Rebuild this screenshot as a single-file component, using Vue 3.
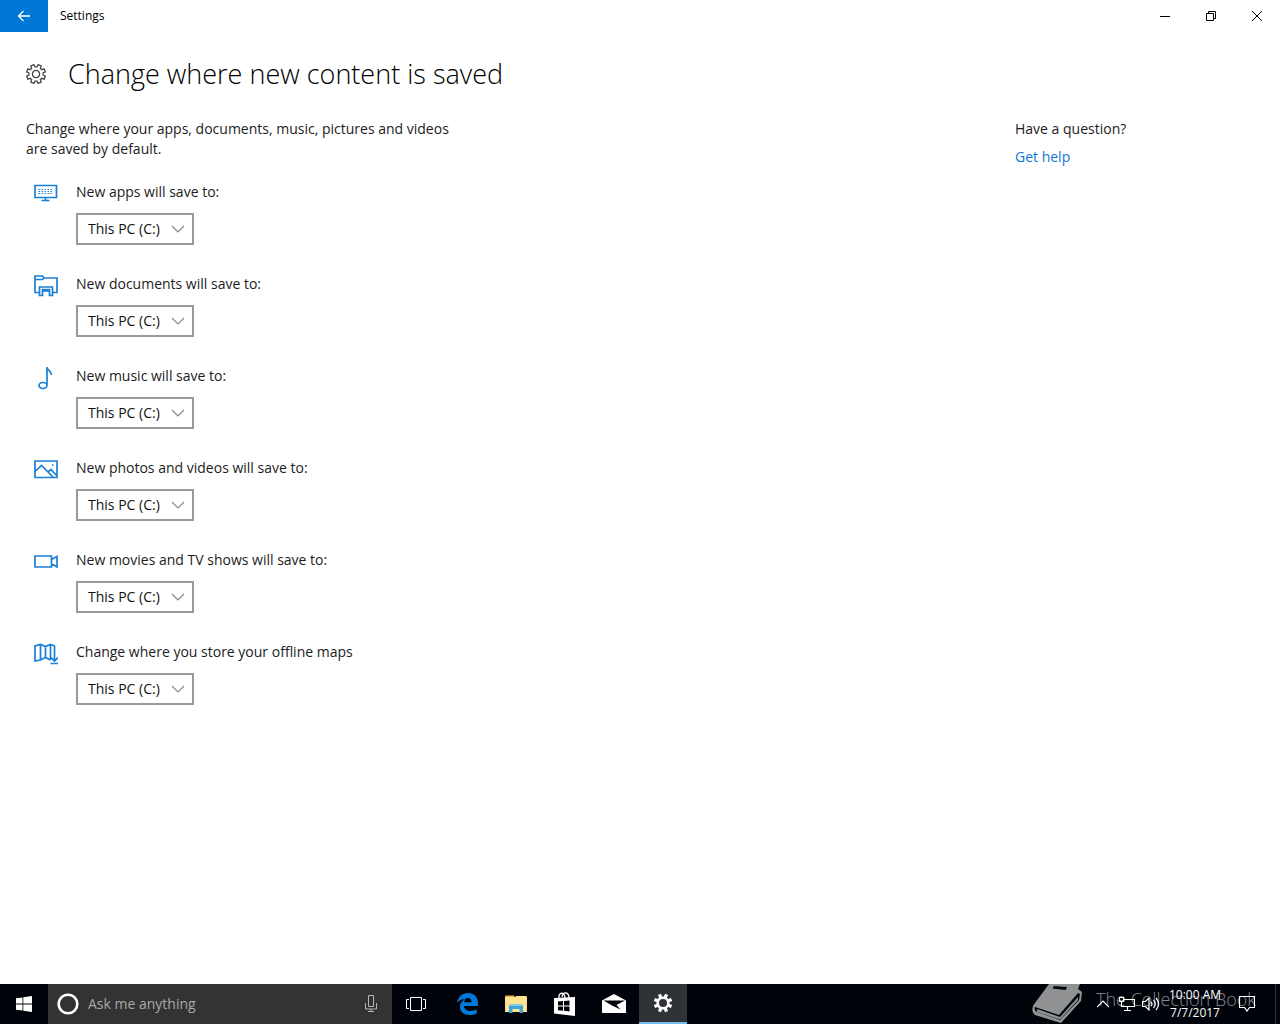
<script setup>
import { reactive } from 'vue'

const locations = reactive([
  { id: 'apps', label: 'New apps will save to:', drive: 'C' },
  { id: 'documents', label: 'New documents will save to:', drive: 'C' },
  { id: 'music', label: 'New music will save to:', drive: 'C' },
  { id: 'photos', label: 'New photos and videos will save to:', drive: 'C' },
  { id: 'movies', label: 'New movies and TV shows will save to:', drive: 'C' },
  { id: 'maps', label: 'Change where you store your offline maps', drive: 'C' },
])

// Outline of an eight-toothed cog centred on the origin.
function cog(outer, inner) {
  const points = []
  for (let i = 0; i < 8; i++) {
    const mid = (i * Math.PI) / 4 + Math.PI / 8
    for (const [offset, radius] of [[-0.25, inner], [-0.17, outer], [0.17, outer], [0.25, inner]]) {
      points.push(`${(radius * Math.cos(mid + offset)).toFixed(2)} ${(radius * Math.sin(mid + offset)).toFixed(2)}`)
    }
  }
  return `M${points.join('L')}Z`
}
const outlineCog = cog(9.6, 7.2)
const solidCog = cog(9.4, 6.6)
</script>

<template>
  <div class="window">
    <header class="titlebar">
      <button class="back" aria-label="Back">
        <svg width="14" height="12" viewBox="0 0 14 12"><path d="M13 6H1.5M6.5 1L1.5 6l5 5" /></svg>
      </button>
      <span class="app-name">Settings</span>
      <div class="controls">
        <button aria-label="Minimize"><svg width="10" height="10" viewBox="0 0 10 10"><path d="M0 5.500h10" /></svg></button>
        <button aria-label="Restore"><svg width="10" height="10" viewBox="0 0 10 10"><path d="M.5 2.500h7v7h-7zM2.500 2.500v-2h7v7h-2" /></svg></button>
        <button aria-label="Close"><svg width="10" height="10" viewBox="0 0 10 10"><path d="M0 0l10 10M10 0L0 10" /></svg></button>
      </div>
    </header>

    <main class="content">
      <div class="heading">
        <svg width="20" height="20" viewBox="-10 -10 20 20"><path :d="outlineCog" /><circle r="3.600" /></svg>
        <h1>Change where new content is saved</h1>
      </div>
      <div class="columns">
        <section class="settings">
          <p class="intro">Change where your apps, documents, music, pictures and videos are saved by default.</p>
          <div v-for="item in locations" :key="item.id" class="location">
            <svg class="type-icon" width="24" height="24" viewBox="0 0 24 24">
              <template v-if="item.id === 'apps'">
                <path d="M1 3.500h21.500v12H1zM11.500 15.500v3M7.500 18.500h8" />
                <path class="dots" d="M4.500 7.500h15M4.500 11.500h15M4.500 9.500h15" />
              </template>
              <path v-else-if="item.id === 'documents'" d="M5 18.500H1V2h7.500l1.500 2h13v14.500h-4M1 5.500h7.500L10 4M5.500 21.500v-8.500h13v8.500h-3V17h-7v4.500zM8.500 17v-1.500h7V17" />
              <template v-else-if="item.id === 'music'">
                <path d="M13 18.500V1c.3 3.500 4.500 4 4.500 8" /><ellipse cx="9" cy="19.500" rx="4" ry="3" />
              </template>
              <template v-else-if="item.id === 'photos'">
                <path d="M1 3h22v16.500H1zM1 13.500l6.500-6 12 12M14 14l3-2.500 6 6.500" /><path d="M18 7h1.500" />
              </template>
              <path v-else-if="item.id === 'movies'" d="M1 6h16.500v11H1zM17.500 9.500L23 6.500v10.500l-5.500-3.500" />
              <path v-else d="M16.500 18l-5-2.500-5 2.500L1 19V4l5.500-1.500 5 2 5-2 4 1.500v15M6.500 2.500V18M11.500 4.500v11M16.500 2.500V18M17 15.500l3.500 3.500 3.500-3.500M16.500 21.500h7.500" />
            </svg>
            <div class="field">
              <label :for="item.id">{{ item.label }}</label>
              <div class="picker">
                <select :id="item.id" v-model="item.drive"><option value="C">This PC (C:)</option></select>
                <svg width="14" height="8" viewBox="0 0 14 8"><path d="M1 1l6 6 6-6" /></svg>
              </div>
            </div>
          </div>
        </section>
        <aside class="help">
          <p>Have a question?</p>
          <a href="#help">Get help</a>
        </aside>
      </div>
    </main>

    <footer class="taskbar">
      <button class="task" aria-label="Start">
        <svg width="16" height="16" viewBox="0 0 16 16"><path fill="#fff" d="M0 2.300L6.500 1.400v6.200H0zM7.300 1.300L16 0v7.600H7.300zM0 8.400h6.500v6.200L0 13.700zM7.300 8.400H16V16l-8.700-1.300z" /></svg>
      </button>
      <div class="search">
        <svg width="24" height="24" viewBox="0 0 24 24"><circle cx="12" cy="12" r="9.300" fill="none" stroke="#fff" stroke-width="2.600" /></svg>
        <input type="text" placeholder="Ask me anything" aria-label="Search">
        <button class="mic" aria-label="Speak">
          <svg width="12" height="18" viewBox="0 0 12 18"><path fill="none" stroke="#b4b4b4" d="M3.500.5h5v11h-5zM.5 8v6h11V8M6 14v2.500M3 16.500h6" /></svg>
        </button>
      </div>
      <button class="task view" aria-label="Task View">
        <svg width="20" height="14" viewBox="0 0 20 14"><path fill="none" stroke="#fff" d="M4.500.5h11v13h-11zM3 2.500H.5v9H3M17 2.500h2.500v9H17" /></svg>
      </button>
      <nav class="pinned">
        <button class="task" aria-label="Edge">
          <svg width="21" height="22" viewBox="0 0 21 22"><path fill="#0078d7" d="M0 10C1 4 5 0 11 0c6.500 0 10 4.500 10 10v3H7c.2 3.500 3 5 6.500 5 2.300 0 4.300-.6 6.200-1.700v4.200C17.600 21.600 15 22 12.500 22 6.500 22 3 18.600 3 14c0-4 2.500-6.500 5.500-8C4.800 6 2 7.600 0 10zM7.200 9.200h7.300C14.500 6.600 13.200 5 11 5 8.800 5 7.400 6.700 7.200 9.200z" /></svg>
        </button>
        <button class="task" aria-label="File Explorer">
          <svg width="22" height="20" viewBox="0 0 22 20"><path fill="#e8b83f" d="M1 1.500h8l1 2h11V18H0V2z" /><path fill="#fce391" d="M1 3h9l1.500-1H21l1 1v15H0V4z" /><path fill="#3ea6d7" d="M4 19v-7l1.500-1.500h11L18 12v7h-3.500v-4h-7v4z" /><path fill="#78cdf0" d="M5.500 10.500h11v1.500h-11z" /></svg>
        </button>
        <button class="task" aria-label="Store">
          <svg width="22" height="24" viewBox="0 0 22 24"><path fill="none" stroke="#fff" stroke-width="1.300" d="M5 7c-1-8 6-7 6-1M8 5c1-6 7-5 7 1" /><path fill="#fff" fill-rule="evenodd" d="M0 6l21-1v19L0 21.500zM4 9.500v4h5V9zM10 9v4.500h5.500V8.500zM4 14.500v3.700l5 .5v-4.200zM10 14.500v4.300l5.500.7v-5z" /></svg>
        </button>
        <button class="task" aria-label="Mail">
          <svg width="24" height="20" viewBox="0 0 24 20"><path fill="#fff" d="M0 6.500L12 0l12 6.500V19H0z" /><path fill="#00040a" d="M1.500 6.500H23l-8.500 4.500 4 4.500L10 11.500z" /></svg>
        </button>
        <button class="task active" aria-label="Settings">
          <svg width="20" height="20" viewBox="-10 -10 20 20"><path fill="#fff" :d="solidCog" /><circle r="4" fill="#2f3338" /></svg>
        </button>
      </nav>
      <div class="watermark">
        <svg width="50" height="40" viewBox="0 0 50 40"><path fill="#8f9193" d="M17 0h31l-2 5 4 3-1 9-20 22L3 31c-4-3-3-9 0-12z" /><path fill="#00040a" d="M22 2l13 1-1.500 3-13-1.500zM3 23l24 8L46 9l2 1-1 6-19 20L5 28c-2-1-3-3-2-5z" /><path fill="#8f9193" d="M5 25l23 8 18-20v3L28 35.500 5 28z" /></svg>
        <span>The Collection Book</span>
      </div>
      <div class="tray">
        <button aria-label="Show hidden icons"><svg width="12" height="8" viewBox="0 0 12 8"><path d="M0 7l6-6 6 6" /></svg></button>
        <button aria-label="Network"><svg width="16" height="14" viewBox="0 0 16 14"><path d="M5 2.500h10.500v7H2.500V5M.5.5h4v4h-4zM8.500 10v3M5 13.500h7" /></svg></button>
        <button aria-label="Volume"><svg width="18" height="14" viewBox="0 0 18 14"><path d="M.5 4.500h3L7 1v12L3.500 9.500h-3zM9 5q2 2 0 4M11.500 3q3.500 4 0 8M14 1q5 6 0 12" /></svg></button>
        <div class="clock"><time>10:00 AM</time><time>7/7/2017</time></div>
        <button class="action" aria-label="Action Center"><svg width="16" height="16" viewBox="0 0 16 16"><path d="M.5.5h15v11h-5L8 15l-2.500-3.500h-5z" /></svg></button>
      </div>
    </footer>
  </div>
</template>

<style>
body {
  margin: 0;
}
</style>

<style scoped>
.window {
  display: flex;
  flex-direction: column;
  min-height: 100vh;
  background: #fff;
  color: #1c1c1c;
  font: 14px/20px "Open Sans", "Noto Sans", sans-serif;
}
button {
  display: flex;
  align-items: center;
  justify-content: center;
  padding: 0;
  border: 0;
  background: none;
}
svg {
  display: block;
  flex: none;
}
p,
h1 {
  margin: 0;
}
.titlebar {
  display: flex;
  align-items: center;
  height: 32px;
}
.back {
  width: 48px;
  height: 32px;
  background: #0078d7;
}
.back path {
  fill: none;
  stroke: #fff;
  stroke-width: 1.3;
}
.app-name {
  margin-left: 12px;
  color: #000;
  font-size: 12px;
}
.controls {
  display: flex;
  margin-left: auto;
}
.controls button {
  width: 46px;
  height: 32px;
}
.controls path {
  fill: none;
  stroke: #000;
}
.content {
  flex: 1;
  padding: 24px 26px;
}
.heading {
  display: flex;
  align-items: center;
  gap: 22px;
  height: 36px;
}
.heading path,
.heading circle {
  fill: none;
  stroke: #444;
  stroke-width: 1.3;
}
h1 {
  color: #000;
  font-size: 27px;
  font-weight: 300;
  line-height: 36px;
  white-space: nowrap;
}
.columns {
  display: flex;
  justify-content: space-between;
  margin-top: 27px;
}
.intro {
  width: 440px;
  margin-bottom: 23px;
}
.location {
  display: flex;
  gap: 18px;
  height: 92px;
  padding-left: 8px;
}
.type-icon {
  fill: none;
  stroke: #1a7fd6;
  stroke-width: 1.7;
}
.type-icon .dots {
  stroke-width: 1.2;
  stroke-dasharray: 1.500 1.500;
}
.field label {
  display: block;
  margin-bottom: 11px;
}
.picker {
  display: grid;
  width: 118px;
  align-items: center;
}
.picker > * {
  grid-area: 1 / 1;
}
.picker svg {
  justify-self: end;
  margin-right: 9px;
  pointer-events: none;
}
.picker path {
  fill: none;
  stroke: #888;
  stroke-width: 1.2;
}
select {
  appearance: none;
  width: 100%;
  height: 32px;
  padding: 0 0 0 10px;
  border: 2px solid #999;
  border-radius: 0;
  background: #fff;
  color: #111;
  font: inherit;
}
.help {
  width: 239px;
}
.help p {
  margin-bottom: 8px;
}
.help a {
  color: #0f78d4;
  text-decoration: none;
}
.taskbar {
  position: relative;
  display: flex;
  height: 40px;
  overflow: hidden;
  background: #00040a;
}
.task {
  width: 48px;
  height: 40px;
}
.search {
  display: flex;
  align-items: center;
  width: 344px;
  background: #333;
}
.search > svg {
  margin: 0 8px;
}
.search input {
  flex: 1;
  min-width: 0;
  padding: 0;
  border: 0;
  outline: 0;
  background: none;
  color: #fff;
  font: inherit;
}
.search input::placeholder {
  color: #a9a9a9;
  opacity: 1;
}
.mic {
  width: 42px;
  height: 40px;
}
.view {
  margin-right: 3px;
}
.pinned {
  display: flex;
  gap: 1px;
}
.active {
  border-bottom: 2px solid #76b9ed;
  background: #2f3338;
}
.watermark {
  position: absolute;
  top: 0;
  right: 24px;
  display: flex;
  align-items: flex-start;
  gap: 14px;
  color: #85878a;
  font-size: 18px;
  font-weight: 300;
  line-height: 30px;
}
.tray {
  position: relative;
  display: flex;
  align-items: center;
  margin-left: auto;
  margin-right: 4px;
  padding-right: 8px;
  border-right: 1px solid #33363a;
}
.tray button {
  width: 24px;
  height: 40px;
}
.tray path {
  fill: none;
  stroke: #fff;
  stroke-width: 1.2;
}
.clock {
  display: flex;
  flex-direction: column;
  width: 64px;
  align-items: center;
  color: #fff;
  font-size: 12px;
  line-height: 18px;
}
.tray .action {
  width: 40px;
}
</style>
